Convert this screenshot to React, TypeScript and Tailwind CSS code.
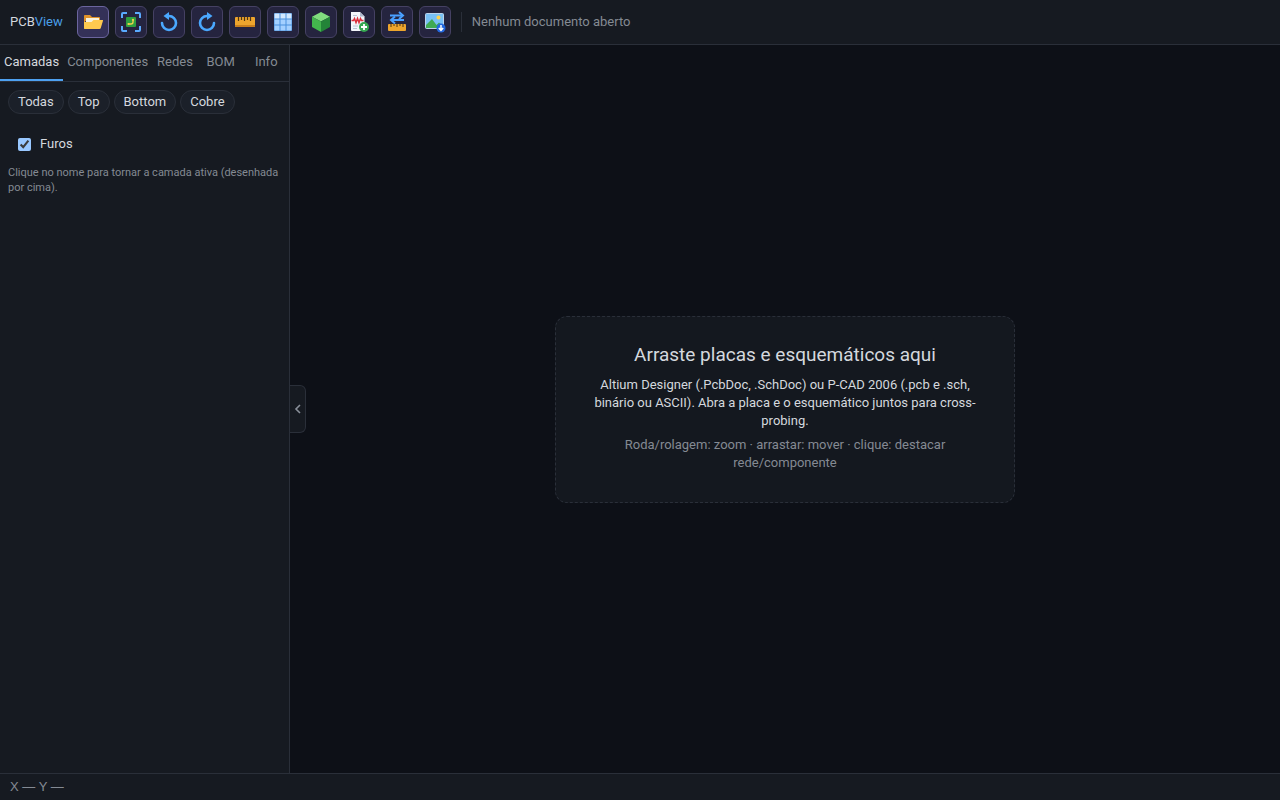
import { useState } from "react";
import type { ReactNode } from "react";

const TABS = ["Camadas", "Componentes", "Redes", "BOM", "Info"];
const PRESETS = ["Todas", "Top", "Bottom", "Cobre"];

function Icon({ children }: { children: ReactNode }) {
  return (
    <svg width="22" height="22" viewBox="0 0 22 22" fill="none" aria-hidden>
      {children}
    </svg>
  );
}

function OpenIcon() {
  return (
    <Icon>
      <path d="M2 4.5Q2 4 3 4h5l2 2h7q1 0 1 1v3H2z" fill="#e0922a" />
      <path d="M4 7h13v6H4z" fill="#f7f0dc" />
      <path d="M2 8.5V17q0 1 1 1V8z" fill="#e0922a" />
      <path d="M2 11h7.5l2-2h9q.8 0 .5.8l-2.3 7.4q-.3.8-1.2.8H3q-1 0-1-.8z" fill="#ffca4f" />
    </Icon>
  );
}

function FitIcon() {
  return (
    <Icon>
      <path
        d="M2 7V3q0-1 1-1h4M15 2h4q1 0 1 1v4M20 15v4q0 1-1 1h-4M7 20H3q-1 0-1-1v-4"
        stroke="#5aabff"
        strokeWidth="2"
      />
      <rect x="6" y="6" width="10" height="10" rx="1" fill="#2f9e3f" />
      <path d="M8.5 13H11q2 0 2-2V9" stroke="#f4cf4d" strokeWidth="1.3" />
      <circle cx="8.5" cy="13" r="1.1" fill="#f4cf4d" />
      <circle cx="13" cy="8.8" r="1.1" fill="#f4cf4d" />
    </Icon>
  );
}

function RotateLeftIcon() {
  return (
    <Icon>
      <path d="M10 5h1a7 7 0 1 1-7 7" stroke="#4aa8ff" strokeWidth="2.6" strokeLinecap="round" />
      <path d="M5.5 5 11 1v8z" fill="#4aa8ff" />
    </Icon>
  );
}

function RotateRightIcon() {
  return (
    <Icon>
      <path d="M12 5h-1a7 7 0 1 0 7 7" stroke="#4aa8ff" strokeWidth="2.6" strokeLinecap="round" />
      <path d="M16.5 5 11 1v8z" fill="#4aa8ff" />
    </Icon>
  );
}

function RulerIcon() {
  return (
    <Icon>
      <rect x="1" y="6" width="20" height="10" rx="1" fill="#eda52d" />
      <path d="M1 14h20v1q0 1-1 1H2q-1 0-1-1z" fill="#c97f1c" />
      <path d="M4.5 6v4M7.5 6v3M10.5 6v4M13.5 6v3M16.5 6v4" stroke="#4d3415" strokeWidth="1.2" />
    </Icon>
  );
}

function GridIcon() {
  return (
    <Icon>
      <rect x="2" y="2" width="18" height="18" rx="1" fill="#4a90dd" />
      {[2, 8, 14].map((y) =>
        [2, 8, 14].map((x) => (
          <rect key={`${x}-${y}`} x={x + 0.5} y={y + 0.5} width="5" height="5" fill={y === 2 ? "#d2e8ff" : "#a4d0ff"} />
        )),
      )}
    </Icon>
  );
}

function CubeIcon() {
  return (
    <Icon>
      <path d="m11 1 9 4.7-9 4.8-9-4.8z" fill="#80dc7e" />
      <path d="m2 5.7 9 4.8V21l-9-5z" fill="#43b64d" />
      <path d="m20 5.7-9 4.8V21l9-5z" fill="#238438" />
    </Icon>
  );
}

function SchematicIcon() {
  return (
    <Icon>
      <path d="M3 1h9l4.5 4.5V20H4q-1 0-1-1z" fill="#f3f5fa" />
      <path d="M12 1v4.5h4.5z" fill="#aeb8cc" />
      <path d="M3.5 9.5h2l1-2 1.5 4 1.5-4 1.5 4 1.5-4 1 2h2" stroke="#dc2f3c" strokeWidth="1.5" />
      <path d="M5 15h5M5 17.5h4M5 4.5h4" stroke="#bac4d5" />
      <circle cx="16" cy="16" r="5" fill="#36a852" />
      <path d="M16 13v6M13 16h6" stroke="#fff" strokeWidth="1.8" />
    </Icon>
  );
}

function UnitsIcon() {
  return (
    <Icon>
      <path d="M4 4.5h12M18 9H6" stroke="#4aa0ff" strokeWidth="2" />
      <path d="m13 1 4 3.5L13 8M9 5.5 5 9l4 3.5" stroke="#4aa0ff" strokeWidth="2" />
      <rect x="2" y="13" width="18" height="7" rx="1" fill="#eda52d" />
      <path d="M5 13v3M8 13v2M11 13v3M14 13v2M17 13v3" stroke="#4d3415" />
    </Icon>
  );
}

function ExportIcon() {
  return (
    <Icon>
      <rect x="1.5" y="2.5" width="18" height="15" rx="1" fill="#79c0f5" stroke="#b9d3ec" />
      <path d="m2 14 6-6 4.5 6 2.5-2.5 4 4V17H2z" fill="#3faa54" />
      <circle cx="14.5" cy="6.5" r="2" fill="#ffd34f" />
      <circle cx="17" cy="17" r="4.5" fill="#2267df" />
      <path d="M17 14v5M14.8 17l2.2 2.3 2.2-2.3" stroke="#fff" strokeWidth="1.5" />
    </Icon>
  );
}

const TOOLS = [
  { label: "Abrir", icon: <OpenIcon />, primary: true },
  { label: "Ajustar à tela", icon: <FitIcon /> },
  { label: "Girar à esquerda", icon: <RotateLeftIcon /> },
  { label: "Girar à direita", icon: <RotateRightIcon /> },
  { label: "Medir", icon: <RulerIcon /> },
  { label: "Grade", icon: <GridIcon /> },
  { label: "Vista 3D", icon: <CubeIcon /> },
  { label: "Adicionar esquemático", icon: <SchematicIcon /> },
  { label: "Unidades", icon: <UnitsIcon /> },
  { label: "Exportar imagem", icon: <ExportIcon /> },
];

function Toolbar() {
  return (
    <header className="flex items-center gap-1.5 border-b border-[#2a2f39] bg-[#161a21] px-2.5 py-1.5">
      <div className="mr-2">
        PCB<span className="text-[#4a9fe8]">View</span>
      </div>
      {TOOLS.map((tool) => (
        <button
          key={tool.label}
          type="button"
          aria-label={tool.label}
          className={`flex size-8 shrink-0 items-center justify-center rounded-md border ${
            tool.primary ? "border-[#6b659e] bg-[#343158]" : "border-[#454163] bg-[#25243f]"
          }`}
        >
          {tool.icon}
        </button>
      ))}
      <div className="ml-1 h-5 w-px bg-[#2a2f39]" />
      <span className="ml-1 text-[#848a93]">Nenhum documento aberto</span>
    </header>
  );
}

function Sidebar() {
  const [tab, setTab] = useState("Camadas");
  const [holes, setHoles] = useState(true);

  return (
    <aside className="w-[290px] shrink-0 border-r border-[#2a2f39] bg-[#161a21]">
      <nav className="flex border-b border-[#2a2f39]">
        {TABS.map((name) => (
          <button
            key={name}
            type="button"
            onClick={() => setTab(name)}
            className={`flex-1 border-b-2 px-1 py-2 ${
              tab === name ? "border-[#4ea1f0] text-[#d4d8de]" : "border-transparent text-[#848a93]"
            }`}
          >
            {name}
          </button>
        ))}
      </nav>
      <div className="p-2">
        <div className="flex gap-1">
          {PRESETS.map((name) => (
            <button
              key={name}
              type="button"
              className="rounded-full border border-[#2a2f39] bg-[#1b2029] px-[9px] py-0.5"
            >
              {name}
            </button>
          ))}
        </div>
        <label className="mt-[21px] flex items-center gap-[9px] px-2.5">
          <input
            type="checkbox"
            checked={holes}
            onChange={(e) => setHoles(e.target.checked)}
            className="size-[13px] scheme-dark"
          />
          Furos
        </label>
        <p className="mt-3 text-[11px] leading-[15px] text-[#848a93]">
          Clique no nome para tornar a camada ativa (desenhada por cima).
        </p>
      </div>
    </aside>
  );
}

export default function App() {
  return (
    <div className="flex min-h-screen flex-col bg-[#0d1017] font-['Roboto','Liberation_Sans',sans-serif] text-[13px] leading-[18px] text-[#d4d8de]">
      <Toolbar />
      <div className="flex flex-1">
        <Sidebar />
        <main className="relative flex flex-1 items-center justify-center">
          <button
            type="button"
            aria-label="Recolher painel"
            className="absolute top-1/2 left-0 flex h-12 w-4 -translate-y-1/2 items-center justify-center rounded-r-md border border-l-0 border-[#2a2f39] bg-[#161a21] text-[#8a909a]"
          >
            <svg width="8" height="10" viewBox="0 0 8 10" fill="none" stroke="currentColor" strokeWidth="1.6" aria-hidden>
              <path d="M6 1 2 5l4 4" />
            </svg>
          </button>
          <section className="w-full max-w-[460px] rounded-xl border border-dashed border-[#2a2f39] bg-[#14181f] px-9 pt-6 pb-[30px] text-center">
            <h1 className="mb-[7px] text-[19px] leading-7">Arraste placas e esquemáticos aqui</h1>
            <p className="mb-1.5">
              Altium Designer (.PcbDoc, .SchDoc) ou P-CAD 2006 (.pcb e .sch, binário ou ASCII). Abra a placa e o
              esquemático juntos para cross-probing.
            </p>
            <p className="text-[#848a93]">Roda/rolagem: zoom · arrastar: mover · clique: destacar rede/componente</p>
          </section>
        </main>
      </div>
      <footer className="border-t border-[#2a2f39] bg-[#161a21] px-2.5 py-1 font-['Liberation_Sans',Arial,sans-serif] text-[#848a93]">
        X — Y —
      </footer>
    </div>
  );
}
